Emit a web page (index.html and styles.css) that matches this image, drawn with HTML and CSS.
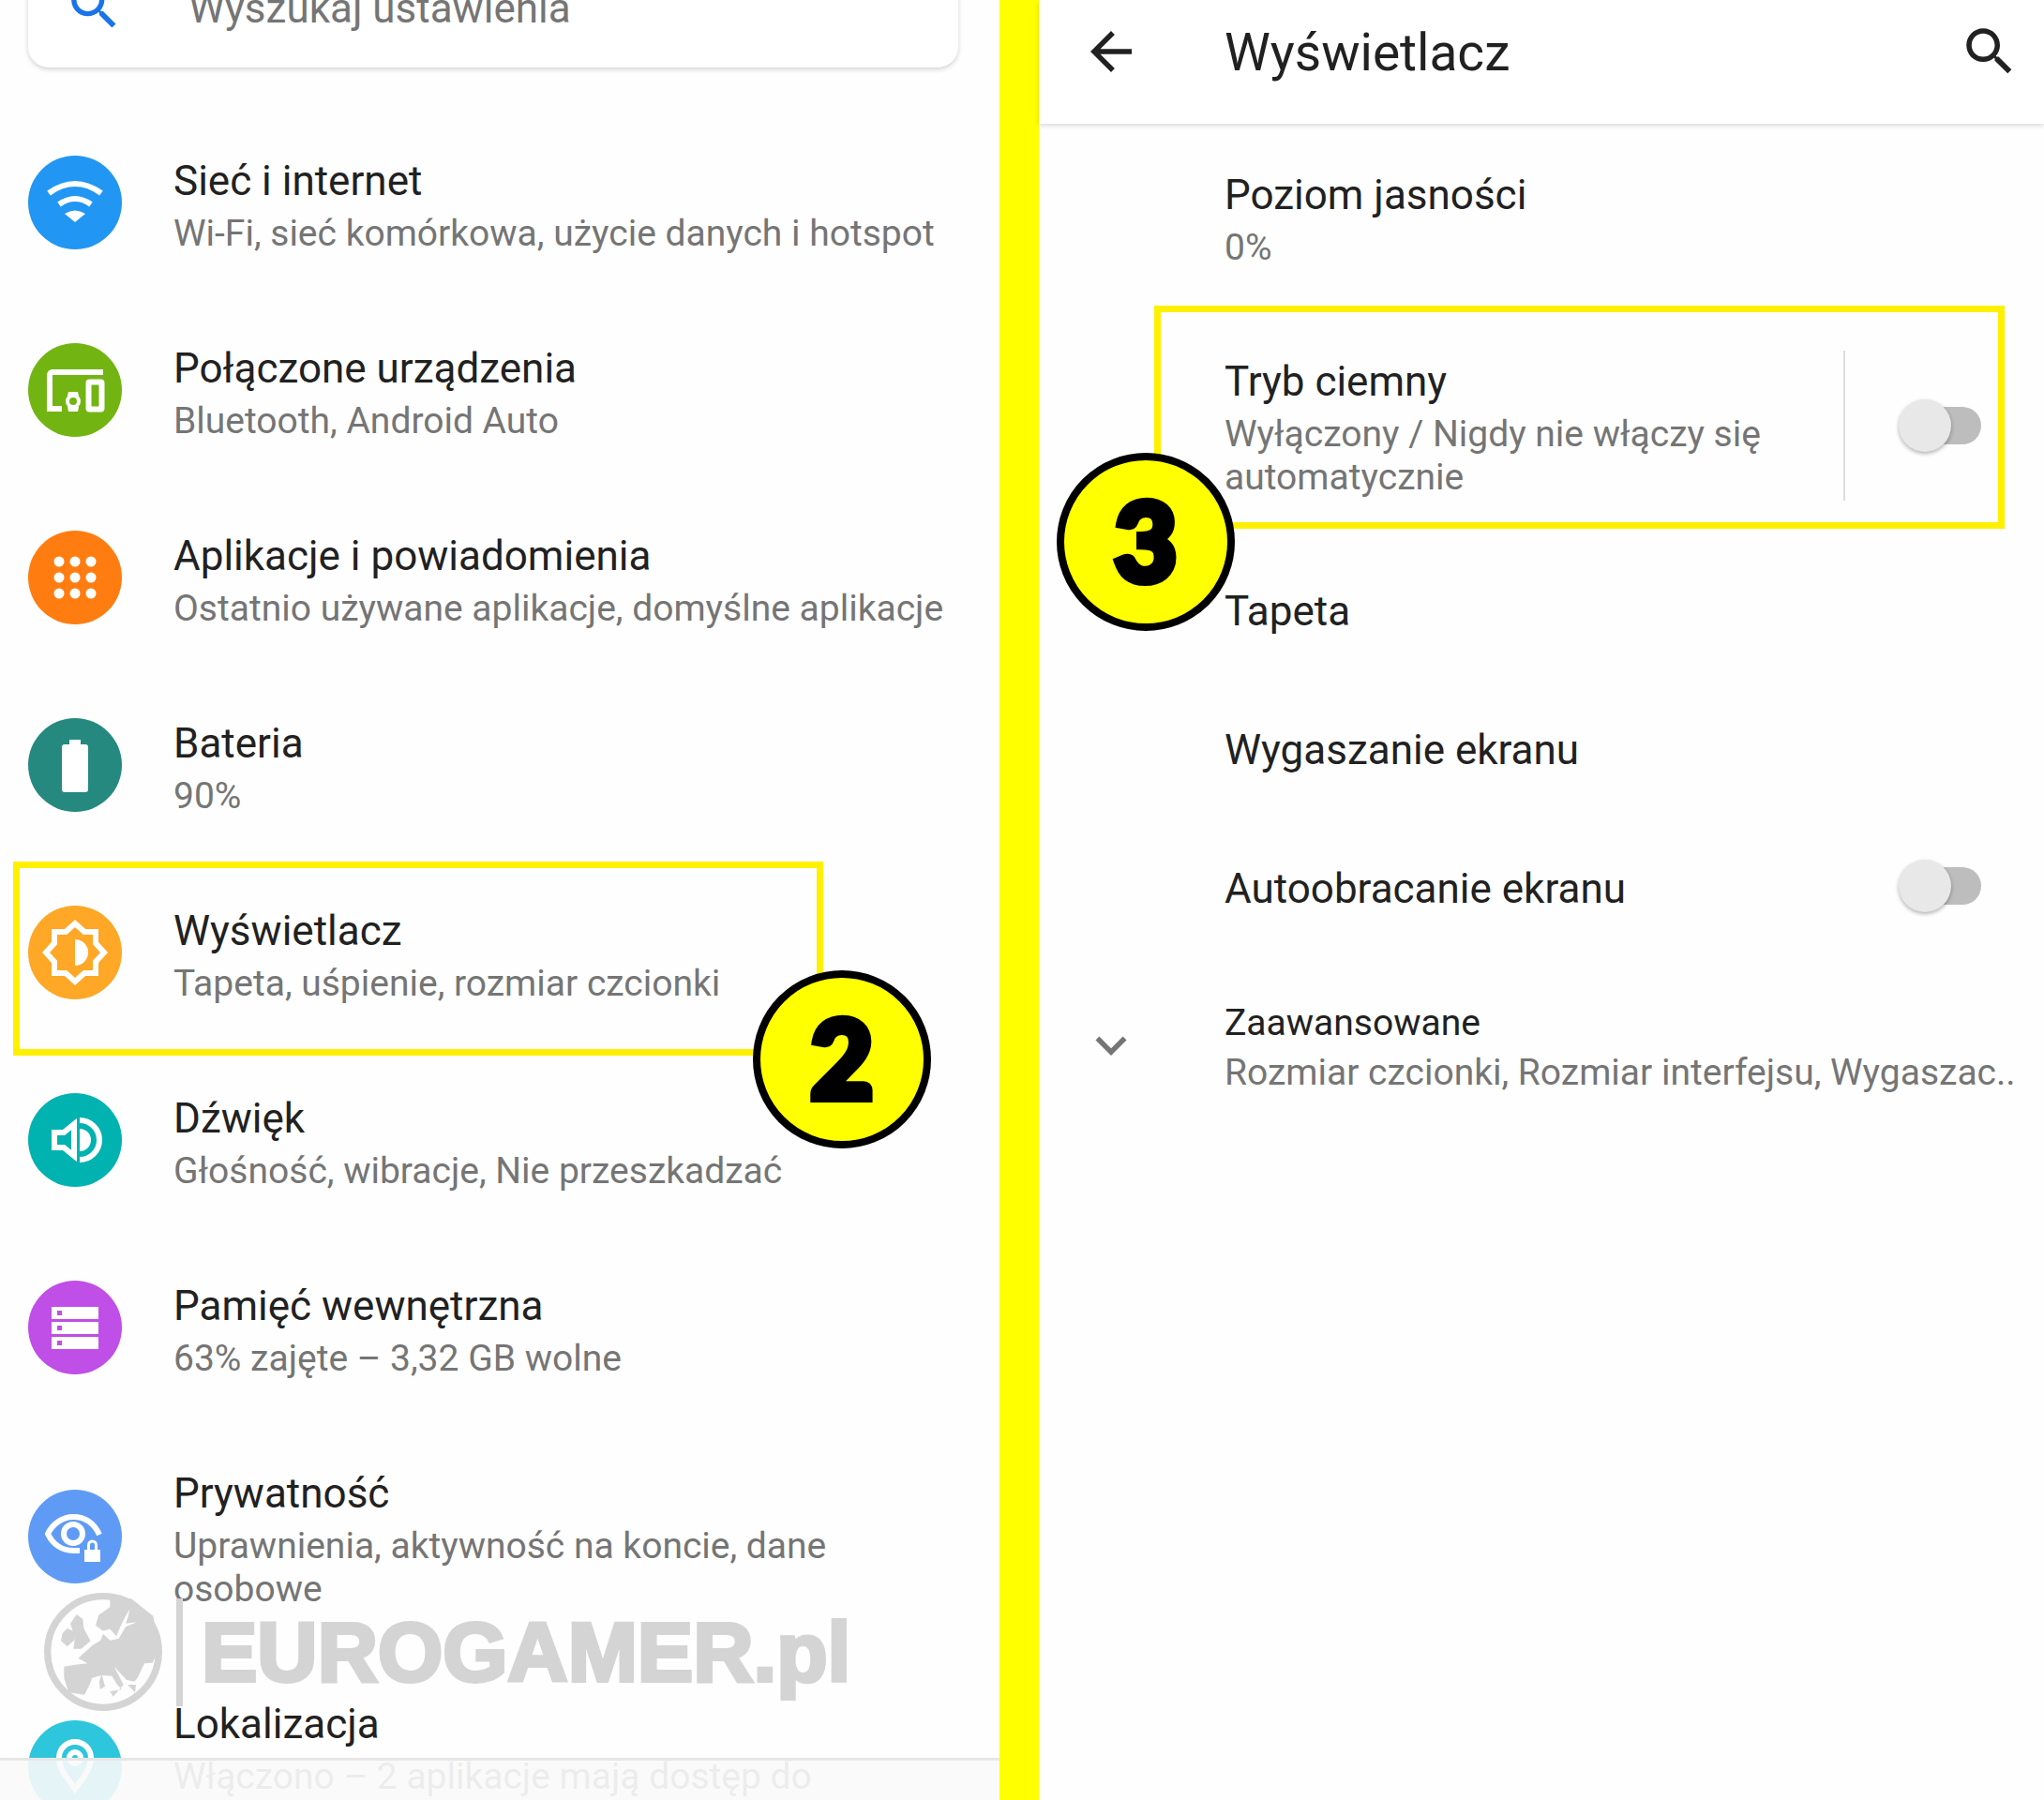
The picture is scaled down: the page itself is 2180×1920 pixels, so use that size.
FILE: index.html
```html
<!DOCTYPE html>
<html lang="pl">
<head>
  <meta charset="UTF-8" />
  <title>Ustawienia</title>
  <link rel="stylesheet" href="styles.css">
</head>
<body>
  <div class="screen">

    <section class="panel-left">
      <div class="search-card">
        <svg class="search-icon" viewBox="0 0 24 24"><path d="M15.5 14h-.79l-.28-.27C15.41 12.59 16 11.11 16 9.5 16 5.91 13.09 3 9.5 3S3 5.91 3 9.5 5.91 16 9.5 16c1.61 0 3.09-.59 4.23-1.57l.27.28v.79l5 4.99L20.49 19l-4.99-5zm-6 0C7.01 14 5 11.99 5 9.5S7.01 5 9.5 5 14 7.01 14 9.5 11.99 14 9.5 14z"/></svg>
        <span class="search-text">Wyszukaj ustawienia</span>
      </div>

      <div class="menu">
        <div class="row">
          <svg class="icon c-blue" viewBox="0 0 100 100">
            <path class="line" d="M22 40Q50 20 78 40"/>
            <path class="line" d="M33 52Q50 40 67 52"/>
            <path class="solid" d="M39 62Q50 55 61 62L50 71Z"/>
          </svg>
          <div class="text">
            <div class="title">Sieć i internet</div>
            <div class="sub">Wi-Fi, sieć komórkowa, użycie danych i hotspot</div>
          </div>
        </div>

        <div class="row">
          <svg class="icon c-green" viewBox="0 0 100 100">
            <path class="line" d="M80 31H26a3 3 0 0 0-3 3V70H36"/>
            <circle class="line thin" cx="48" cy="62" r="6"/>
            <path class="solid" d="M43 52H53L54 56H42ZM42 68H54L53 73H43Z"/>
            <rect class="line" x="64.500" y="41.500" width="14" height="29" rx="1"/>
          </svg>
          <div class="text">
            <div class="title">Połączone urządzenia</div>
            <div class="sub">Bluetooth, Android Auto</div>
          </div>
        </div>

        <div class="row">
          <svg class="icon c-orange" viewBox="0 0 100 100">
            <g class="solid">
              <circle cx="33" cy="33" r="5.500"/><circle cx="50" cy="33" r="5.500"/><circle cx="67" cy="33" r="5.500"/>
              <circle cx="33" cy="50" r="5.500"/><circle cx="50" cy="50" r="5.500"/><circle cx="67" cy="50" r="5.500"/>
              <circle cx="33" cy="67" r="5.500"/><circle cx="50" cy="67" r="5.500"/><circle cx="67" cy="67" r="5.500"/>
            </g>
          </svg>
          <div class="text">
            <div class="title">Aplikacje i powiadomienia</div>
            <div class="sub">Ostatnio używane aplikacje, domyślne aplikacje</div>
          </div>
        </div>

        <div class="row">
          <svg class="icon c-teal" viewBox="0 0 100 100">
            <path class="solid" d="M44 23H56V28H61a3 3 0 0 1 3 3V76a3 3 0 0 1-3 3H39a3 3 0 0 1-3-3V31a3 3 0 0 1 3-3H44Z"/>
          </svg>
          <div class="text">
            <div class="title">Bateria</div>
            <div class="sub">90%</div>
          </div>
        </div>

        <div class="row">
          <svg class="icon c-amber" viewBox="0 0 100 100">
            <path class="line" d="M81 50L72 60V72H60L50 81 40 72H28V60L19 50 28 40V28H40L50 19 60 28H72V40Z"/>
            <path class="solid" d="M50 36a14 14 0 0 1 0 28Z"/>
          </svg>
          <div class="text">
            <div class="title">Wyświetlacz</div>
            <div class="sub">Tapeta, uśpienie, rozmiar czcionki</div>
          </div>
        </div>

        <div class="row">
          <svg class="icon c-sea" viewBox="0 0 100 100">
            <path class="line" d="M28 42H38L49 33V67L38 58H28Z"/>
            <path class="solid" d="M55 38a12 12 0 0 1 0 24Z"/>
            <path class="line" d="M55 29A21 21 0 0 1 55 71"/>
          </svg>
          <div class="text">
            <div class="title">Dźwięk</div>
            <div class="sub">Głośność, wibracje, Nie przeszkadzać</div>
          </div>
        </div>

        <div class="row">
          <svg class="icon c-purple" viewBox="0 0 100 100">
            <path class="solid" fill-rule="evenodd" d="M25 28H75V41H25ZM31 32V37H36V32ZM25 44H75V57H25ZM31 48V53H36V48ZM25 60H75V73H25ZM31 64V69H36V64Z"/>
          </svg>
          <div class="text">
            <div class="title">Pamięć wewnętrzna</div>
            <div class="sub">63% zajęte – 3,32 GB wolne</div>
          </div>
        </div>

        <div class="row">
          <svg class="icon c-indigo" viewBox="0 0 100 100">
            <path class="line" d="M76 48C70 35 60 29 48 29 36 29 26 37 21 47 26 58 36 65 48 65H55"/>
            <circle class="line" cx="48" cy="47" r="10"/>
            <path class="solid" d="M60 64H63V59a5.500 5.500 0 0 1 11 0V64H77V77H60ZM66 64H71V59a2.500 2.500 0 0 0-5 0Z"/>
          </svg>
          <div class="text">
            <div class="title">Prywatność</div>
            <div class="sub">Uprawnienia, aktywność na koncie, dane osobowe</div>
          </div>
        </div>

        <div class="row">
          <svg class="icon c-cyan" viewBox="0 0 100 100">
            <path class="line" d="M50 73C42 62 33 52 33 40a17 17 0 0 1 34 0C67 52 58 62 50 73Z"/>
            <circle class="line" cx="50" cy="40" r="6"/>
          </svg>
          <div class="text">
            <div class="title">Lokalizacja</div>
            <div class="sub">Włączono – 2 aplikacje mają dostęp do lokalizacji</div>
          </div>
        </div>
      </div>

      <div class="watermark">
        <svg class="globe" viewBox="51 26 378 378">
          <circle cx="240" cy="215" r="178" fill="none" stroke="#d4d4d4" stroke-width="22"/>
          <path fill="#d4d4d4" d="M262 40L262 72 225 98 216 130 240 148 262 142 282 165 298 128 312 100 325 78 320 102 312 124 348 120 312 135 290 172 262 178 240 158 232 178 205 195 160 235 190 252 150 256 115 262 115 300 130 345 180 352 198 318 205 298 235 290 268 292 285 320 300 335 262 342 272 358 305 320 275 262 315 305 340 310 350 298 372 252 398 250 420 200 400 100 330 45Z"/>
          <path fill="#d4d4d4" d="M155 95L175 110 178 140 200 180 170 205 145 205 150 170 135 125Z"/>
          <path fill="#d4d4d4" d="M125 140L148 150 150 175 125 198 105 180 110 155Z"/>
          <path fill="#d4d4d4" d="M235 285L246 325 230 335 228 310Z"/>
          <path fill="#d4d4d4" d="M318 320L345 320 342 345Z"/>
        </svg>
        <div class="wm-bar"></div>
        <div class="wm-text">EUROGAMER.pl</div>
      </div>

      <div class="nav-fade"></div>
      <div class="mark mark-2"></div>
      <div class="badge badge-2">2</div>
    </section>

    <div class="divider"></div>

    <section class="panel-right">
      <header class="topbar">
        <svg class="tool back" viewBox="0 0 24 24"><path d="M20 11H7.830l5.590-5.590L12 4l-8 8 8 8 1.410-1.410L7.830 13H20v-2z"/></svg>
        <h1 class="topbar-title">Wyświetlacz</h1>
        <svg class="tool" viewBox="0 0 24 24"><path d="M15.5 14h-.79l-.28-.27C15.41 12.59 16 11.11 16 9.5 16 5.91 13.09 3 9.5 3S3 5.91 3 9.5 5.91 16 9.5 16c1.61 0 3.09-.59 4.23-1.57l.27.28v.79l5 4.99L20.49 19l-4.99-5zm-6 0C7.01 14 5 11.99 5 9.5S7.01 5 9.5 5 14 7.01 14 9.5 11.99 14 9.5 14z"/></svg>
      </header>

      <div class="pref">
        <div class="pref-text">
          <div class="title">Poziom jasności</div>
          <div class="sub">0%</div>
        </div>
      </div>

      <div class="pref">
        <div class="pref-text">
          <div class="title">Tryb ciemny</div>
          <div class="sub">Wyłączony / Nigdy nie włączy się automatycznie</div>
        </div>
        <div class="pref-sep"></div>
        <div class="toggle"><span class="track"></span><span class="knob"></span></div>
      </div>

      <div class="pref">
        <div class="pref-text"><div class="title">Tapeta</div></div>
      </div>

      <div class="pref">
        <div class="pref-text"><div class="title">Wygaszanie ekranu</div></div>
      </div>

      <div class="pref">
        <div class="pref-text"><div class="title">Autoobracanie ekranu</div></div>
        <div class="toggle toggle-up"><span class="track"></span><span class="knob"></span></div>
      </div>

      <div class="pref pref-adv">
        <svg class="chevron" viewBox="0 0 24 24"><path d="M16.590 8.590L12 13.170 7.410 8.590 6 10l6 6 6-6z"/></svg>
        <div class="pref-text">
          <div class="title">Zaawansowane</div>
          <div class="sub">Rozmiar czcionki, Rozmiar interfejsu, Wygaszac..</div>
        </div>
      </div>

      <div class="mark mark-3"></div>
      <div class="badge badge-3">3</div>
    </section>

  </div>
</body>
</html>
```

FILE: styles.css
```css
* {
  box-sizing: border-box;
}
html, body {
  margin: 0;
  background: #fff;
}
body {
  font-family: Roboto, 'Noto Sans', sans-serif;
  color: #212121;
}
.screen {
  display: flex;
  width: 2180px;
  height: 1920px;
  overflow: hidden;
  background: #fefefe;
}
.panel-left {
  position: relative;
  width: 1066px;
  flex-shrink: 0;
}
.divider {
  width: 42px;
  flex-shrink: 0;
  background: #ffff00;
}
.panel-right {
  position: relative;
  flex: 1;
}

/* search */
.search-card {
  display: flex;
  align-items: center;
  height: 132px;
  margin: -60px 44px 44px 30px;
  padding-left: 38px;
  background: #fff;
  border-radius: 22px;
  box-shadow: 0 2px 5px rgba(0, 0, 0, 0.18);
}
.search-icon {
  width: 65px;
  height: 65px;
  fill: #1a73e8;
  flex-shrink: 0;
}
.search-text {
  margin-left: 68px;
  padding-top: 6px;
  font-size: 44px;
  color: #757575;
}

/* shared text */
.title {
  font-size: 44px;
  line-height: 55px;
  color: #212121;
}
.sub {
  margin-top: 5px;
  font-size: 39px;
  line-height: 46px;
  color: #757575;
}

/* left list */
.row {
  display: flex;
  align-items: center;
  min-height: 200px;
  padding: 50px 30px 44px 30px;
}
.row .text {
  margin-left: 55px;
  flex: 1;
  padding-right: 20px;
}
.icon {
  width: 100px;
  height: 100px;
  margin-top: -6px;
  flex-shrink: 0;
  border-radius: 50%;
}
.line {
  fill: none;
  stroke: #fff;
  stroke-width: 6;
}
.thin {
  stroke-width: 4;
}
.solid {
  fill: #fff;
}
.c-blue { background: #2196f3; }
.c-green { background: #72b513; }
.c-orange { background: #ff7d10; }
.c-teal { background: #26897f; }
.c-amber { background: #ffa726; }
.c-sea { background: #00b2b0; }
.c-purple { background: #bf4fe6; }
.c-indigo { background: #5f9bf5; }
.c-cyan { background: #2dc6dc; }

/* watermark */
.watermark {
  position: absolute;
  left: 47px;
  top: 1699px;
  display: flex;
  align-items: center;
}
.globe {
  width: 126px;
  height: 126px;
}
.wm-bar {
  width: 7px;
  height: 115px;
  margin-left: 15px;
  background: #d4d4d4;
}
.wm-text {
  margin-left: 20px;
  font-family: 'Liberation Sans', Arial, sans-serif;
  font-weight: bold;
  font-size: 89px;
  line-height: 100px;
  color: #d4d4d4;
  -webkit-text-stroke: 4px #d4d4d4;
}
.nav-fade {
  position: absolute;
  left: 0;
  right: 0;
  top: 1875px;
  height: 45px;
  background: rgba(250, 250, 250, 0.9);
  border-top: 3px solid #e6e6e6;
}

/* right panel */
.topbar {
  display: flex;
  align-items: center;
  height: 132px;
  padding: 0 25px 22px 44px;
  background: #fff;
  box-shadow: 0 2px 5px rgba(0, 0, 0, 0.15);
}
.tool {
  width: 66px;
  height: 66px;
  fill: #212121;
  flex-shrink: 0;
}
.topbar-title {
  flex: 1;
  margin: 2px 0 0 88px;
  font-size: 55px;
  font-weight: 400;
  color: #212121;
}
.pref {
  display: flex;
  align-items: center;
  padding: 49px 0 44px 198px;
}
.pref-text {
  flex: 1;
  min-width: 0;
}
.pref-sep {
  width: 2px;
  align-self: stretch;
  margin: -6px 57px -2px 0;
  background: #dcdcdc;
}
.toggle {
  position: relative;
  width: 88px;
  height: 56px;
  margin-right: 67px;
  margin-bottom: 5px;
  flex-shrink: 0;
}
.toggle-up {
  margin-top: -7px;
  margin-bottom: 0;
}
.track {
  position: absolute;
  right: 0;
  top: 8px;
  width: 76px;
  height: 40px;
  border-radius: 20px;
  background: #bdbdbd;
}
.knob {
  position: absolute;
  left: 0;
  top: 0;
  width: 56px;
  height: 56px;
  border-radius: 50%;
  background: #e8e8e8;
  box-shadow: 0 2px 4px rgba(0, 0, 0, 0.3);
}
.pref-adv {
  position: relative;
  padding-top: 46px;
}
.pref-adv .title {
  font-size: 39px;
  line-height: 50px;
}
.pref-adv .sub {
  white-space: nowrap;
}
.chevron {
  position: absolute;
  left: 44px;
  top: 62px;
  width: 66px;
  height: 66px;
  fill: #757575;
}

/* yellow annotations */
.mark {
  position: absolute;
  border: 7px solid #fff000;
}
.mark-2 {
  left: 14px;
  top: 919px;
  width: 864px;
  height: 207px;
}
.mark-3 {
  left: 123px;
  top: 326px;
  width: 907px;
  height: 238px;
}
.badge {
  position: absolute;
  width: 190px;
  height: 190px;
  display: flex;
  align-items: center;
  justify-content: center;
  padding-bottom: 5px;
  border: 8px solid #000;
  border-radius: 50%;
  background: #ffff00;
  font-family: Lato, 'DejaVu Sans', sans-serif;
  font-weight: 900;
  font-size: 116px;
  line-height: 1;
  color: #000;
  -webkit-text-stroke: 8px #000;
}
.badge-2 {
  left: 803px;
  top: 1035px;
}
.badge-3 {
  left: 19px;
  top: 483px;
}
```
